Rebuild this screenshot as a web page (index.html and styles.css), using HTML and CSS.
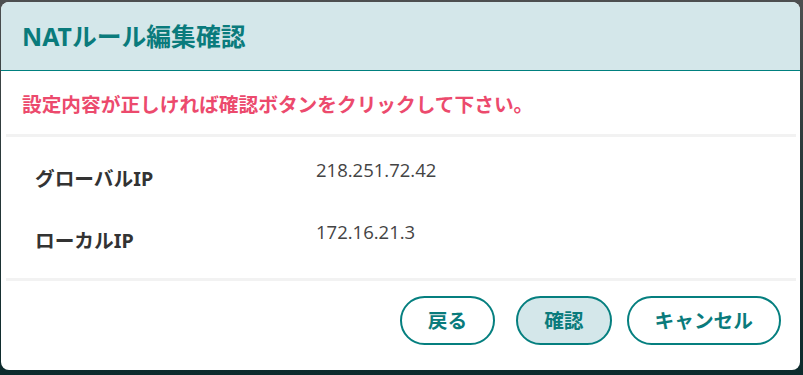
FILE: index.html
```html
<!DOCTYPE html>
<html lang="ja">
<head>
<meta charset="utf-8">
<title>NATルール編集確認</title>
<link rel="stylesheet" href="styles.css">
</head>
<body>
<div class="dialog">
  <header class="dialog-header">
    <h1 class="dialog-title">NATルール編集確認</h1>
  </header>
  <p class="message">設定内容が正しければ確認ボタンをクリックして下さい。</p>
  <div class="details">
    <div class="row">
      <div class="label">グローバルIP</div>
      <div class="value">218.251.72.42</div>
    </div>
    <div class="row">
      <div class="label">ローカルIP</div>
      <div class="value">172.16.21.3</div>
    </div>
  </div>
  <footer class="dialog-footer">
    <button class="btn btn-back">戻る</button>
    <button class="btn btn-primary">確認</button>
    <button class="btn btn-cancel">キャンセル</button>
  </footer>
</div>
</body>
</html>
```
FILE: styles.css
```css
html, body {
  margin: 0;
  padding: 0;
}
body {
  width: 803px;
  height: 375px;
  overflow: hidden;
  background: linear-gradient(180deg, #4d4f50 0%, #2c3a3b 40%, #0c2a2c 100%);
  font-family: "Noto Sans", "Noto Sans CJK JP", sans-serif;
  padding-top: 2px;
  padding-left: 1px;
  box-sizing: border-box;
}
.dialog {
  width: 799px;
  height: 368px;
  background: #ffffff;
  border-radius: 8px;
  overflow: hidden;
  display: flex;
  flex-direction: column;
}
.dialog-header {
  height: 68px;
  background: #d4e7ea;
  border-bottom: 1px solid #00807f;
  display: flex;
  align-items: center;
  padding-left: 21px;
  flex-shrink: 0;
}
.dialog-title {
  margin: 0;
  font-size: 24.8px;
  font-weight: 700;
  color: #0a7b7c;
  line-height: 1;
}
.message {
  margin: 0;
  padding: 20px 0 15px 21px;
  font-size: 19.7px;
  line-height: 28px;
  font-weight: 700;
  color: #ec4a6d;
}
.details {
  margin: 0 4px 0 5px;
  border-top: 3px solid #f2f2f2;
  border-bottom: 3px solid #f2f2f2;
  padding: 9px 0 8px 29px;
}
.row {
  display: grid;
  grid-template-columns: 281px 1fr;
  align-items: center;
  height: 62px;
}
.label {
  font-size: 19.7px;
  font-weight: 700;
  color: #333333;
}
.value {
  font-family: "Open Sans", "Noto Sans", sans-serif;
  font-size: 18.5px;
  color: #444444;
  padding-bottom: 16px;
}
.dialog-footer {
  display: flex;
  justify-content: flex-end;
  align-items: flex-start;
  padding: 15px 19px 0 0;
}
.btn {
  height: 49px;
  box-sizing: border-box;
  border: 2px solid #057f7f;
  border-radius: 25px;
  background: #ffffff;
  color: #0a7b7c;
  font-family: "Noto Sans", "Noto Sans CJK JP", sans-serif;
  font-size: 19.7px;
  font-weight: 700;
  padding: 0 26px;
  line-height: 1;
}
.btn-primary {
  background: #d4e7ea;
  margin-left: 21px;
}
.btn-cancel {
  margin-left: 15px;
}
```
